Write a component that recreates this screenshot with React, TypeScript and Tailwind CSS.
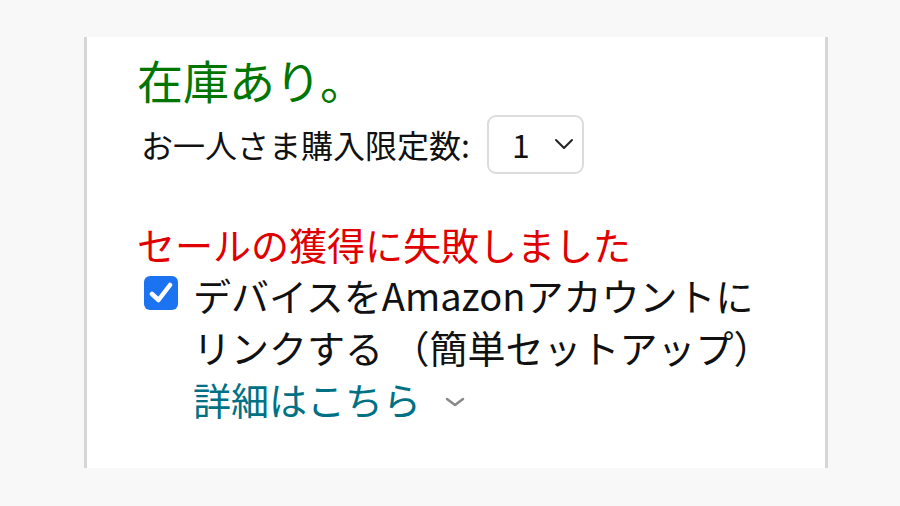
import React from "react";

const font = { fontFamily: '"Noto Sans CJK JP", "Noto Sans", sans-serif' };

export default function App() {
  return (
    <div className="w-[900px] h-[506px] bg-[#f8f8f8] pt-[37px] pl-[84px]" style={font}>
      <div className="w-[744px] h-[431px] bg-white border-x-[3px] border-[#d6d6d6] pl-[50px] pt-[10px]">
        <div className="text-[46px] leading-[64px] text-[#007600]">在庫あり。</div>
        <div className="flex items-center h-[62px] mt-[2px]">
          <span className="text-[32px] leading-[40px] text-[#111] ml-[4px]">お一人さま購入限定数:</span>
          <div className="ml-[17px] w-[97px] h-[59px] border-2 border-[#dcdcdc] rounded-[9px] flex items-center pl-[23px]">
            <span className="text-[32px] leading-none text-[#111]">1</span>
            <svg width="20" height="12" viewBox="0 0 20 12" className="ml-[24px]">
              <path d="M2 2 L10 10 L18 2" fill="none" stroke="#222" strokeWidth="2" strokeLinecap="round" strokeLinejoin="round" />
            </svg>
          </div>
        </div>
        <div className="mt-[44px] text-[38px] leading-[50px] text-[#e00000]">セールの獲得に失敗しました</div>
        <div className="flex">
          <div className="ml-[7px] mt-[7px] w-[34px] h-[34px] rounded-[6px] bg-[#1c73f1] flex items-center justify-center shrink-0">
            <svg width="24" height="22" viewBox="0 0 24 22">
              <path d="M3 12 L9.5 18 L21 3" fill="none" stroke="#fff" strokeWidth="4.5" strokeLinecap="round" strokeLinejoin="round" />
            </svg>
          </div>
          <div className="ml-[15px] text-[38px] leading-[52px] text-[#111]">
            <div>デバイスをAmazonアカウントに</div>
            <div>リンクする （簡単セットアップ）</div>
            <div className="flex items-center">
              <span className="text-[#007185]">詳細はこちら</span>
              <svg width="20" height="10" viewBox="0 0 20 10" className="ml-[24px] mt-[6px]">
                <path d="M2 2 L10 8 L18 2" fill="none" stroke="#888" strokeWidth="2.5" strokeLinecap="round" strokeLinejoin="round" />
              </svg>
            </div>
          </div>
        </div>
      </div>
    </div>
  );
}
